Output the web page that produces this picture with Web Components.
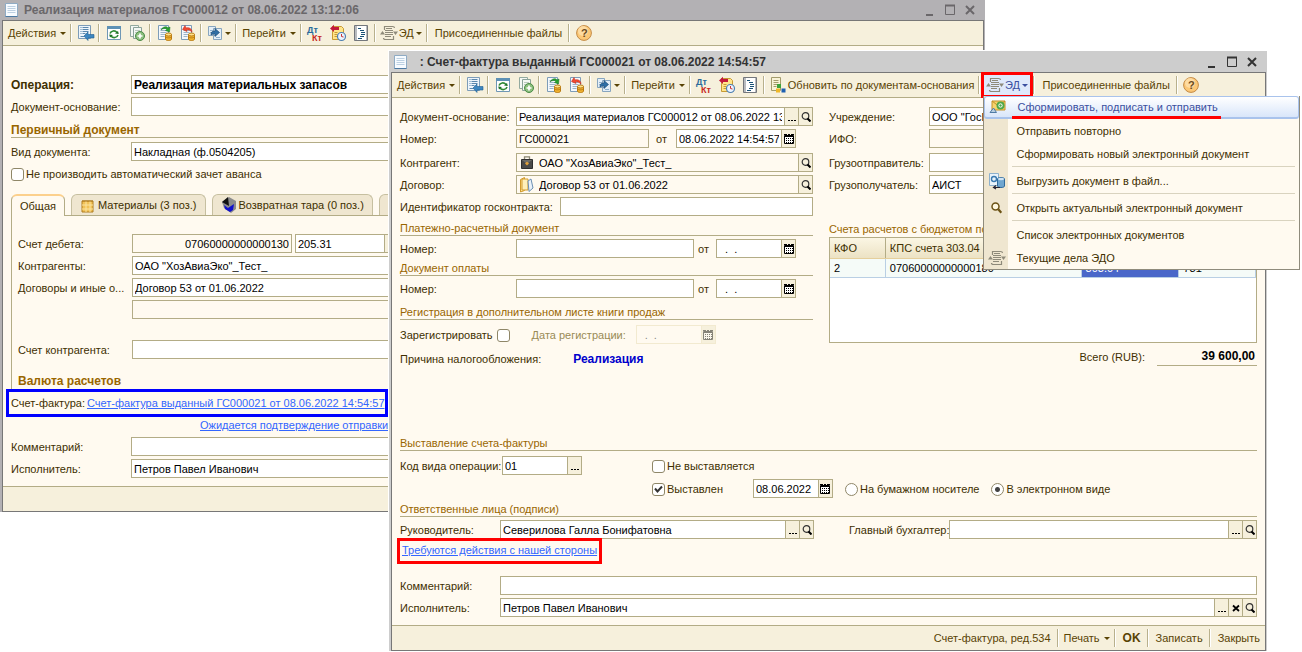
<!DOCTYPE html>
<html lang="ru">
<head>
<meta charset="utf-8">
<title>Счет-фактура выданный</title>
<style>
body { margin: 0; background: #fff; color: #402f00; font: 11px/14px "Liberation Sans", Arial, sans-serif; }
</style>
</head>
<body>
<doc-desktop></doc-desktop>
<script>
const BASE = `*{box-sizing:border-box}
button,input{font:inherit;color:inherit;margin:0;padding:0;border:0;background:none;border-radius:0}
button{cursor:pointer}a{color:#36f}`;

const PAGE = '<path d="M1.5 .5h10v14h-10z" fill="#f4f8fc" stroke="#7d9cb8"/><path d="M3.500 3.500h6M3.500 5.500h6M3.500 7.500h6M3.500 9.500h6M3.500 11.500h4" stroke="#9db4cb"/>';
const COINS = '<path d="M8.500 9.500v4.500c0 2 6 2 6 0V9.500z" fill="#f2b431" stroke="#b97a12"/><ellipse cx="11.500" cy="9.500" rx="3" ry="1.500" fill="#ffe28a" stroke="#b97a12"/><path d="M8.500 11.500c0 1.800 6 1.800 6 0" fill="none" stroke="#b97a12"/>';
const ICONS = {
  doc: '<path d="M1.500 1.500h12v13h-12z" fill="#f7fbff" stroke="#8fabc4"/><path d="M3.500 4.500h8M3.500 6.500h8M3.500 8.500h8M3.500 10.500h8" stroke="#bcd0e2"/><path d="M1.500 14.500h12" stroke="#4d7aa3"/>',
  save: '<path d="M.5 .5h12v13H.5z" fill="#eef5fb" stroke="#7d9cb8"/><path d="M2.500 2.500h1m1 0h6M2.500 4.500h1m1 0h6M2.500 6.500h1m1 0h6M2.500 8.500h1m1 0h3M2.500 11.500h4" stroke="#5b87ad"/><path d="M6 11l4-4v2.500h6v3.500h-6v2.500z" fill="#3d86c0" stroke="#1f5e92" stroke-width=".6"/>',
  refresh: '<path d="M1.500 1.500h13v13h-13z" fill="#fff" stroke="#6f97b5"/><path d="M1 1h14v3H1z" fill="#5e91b5"/><path d="M4 8.500c1-3 5-3.500 7-1M12 10c-1 3-5 3.500-7 1" fill="none" stroke="#2e8a35" stroke-width="1.600"/><path d="M12.800 9l-3.800-.5 3-2.500zM3.200 9.500l3.800.5-3 2.500z" fill="#1d7025"/>',
  copyadd: '<path d="M1.500 .5h8v11h-8z" fill="#f4f8f4" stroke="#93aa9f"/><path d="M4.500 2.500h8v11h-8z" fill="#f4f8f4" stroke="#8ba39a"/><path d="M6 5.500h5M6 7.500h5" stroke="#bccabf"/><circle cx="11" cy="11" r="4.500" fill="#8cc07e" stroke="#4a8a46"/><path d="M11 8.500v5M8.500 11h5" stroke="#fff" stroke-width="1.700"/>',
  post: PAGE + '<path d="M4 5c2-4 6-4 7-2l2-1-.5 5-4-1.500 1.300-1C9 3 6 3 4 5z" fill="#27a22e" stroke="#13701a" stroke-width=".5"/>' + COINS,
  unpost: PAGE + '<path d="M12 7c0-4-4-5-6-4L5 .5 2.500 4.500 7 6.500 6.500 4.800C9 4.500 10 5.500 12 7z" fill="#f04a32" stroke="#c3200c" stroke-width=".5"/>' + COINS,
  goto: '<path d="M1.500 1.500h7v9h-7zM6.500 3.500h8v11h-8z" fill="#e3eef7" stroke="#87a5bf"/><path d="M3 5.500h3M3 7.500h3M9 12.500h4" stroke="#8fb0cc"/><path d="M4 10c0-3 1-4 4-4V3.500l4.500 4L8 11.500V9C6 9 5 9.500 4 10z" fill="#2f6ea5" stroke="#17466f" stroke-width=".6"/>',
  dtkt: '<text x="0" y="8" font-size="9" fill="#2a6a9a" font-weight="bold">Дт</text><text x="5" y="16" font-size="9" fill="#c7281c" font-weight="bold">Кт</text>',
  hist: '<path d="M2.500 1.500h9l2 2v11h-11z" fill="#ffe58a" stroke="#c79a34"/><path d="M4.500 7.500h3M4.500 9.500h3M4.500 11.500h3" stroke="#c79a34"/><path d="M0 3.500L4-.2V2h5v3H4v2z" fill="#c2183a"/><circle cx="11.500" cy="11.500" r="4" fill="#eaf4ff" stroke="#4d7fb0" stroke-width="1.200"/><path d="M11.500 9v2.500l2 .5" fill="none" stroke="#c33"/>',
  list: '<path d="M1.500 .5h13v15h-13z" fill="#b9bcc0" stroke="#74777c"/><path d="M4 1h9v14H4z" fill="#fff"/><path d="M5 3.500h3M7 5.500h4M8 7.500h4M8 9.500h4M7 11.500h4M5 13.500h4" stroke="#1a5277"/>',
  edo: '<path d="M3.500 5V1.500h8c1.500 0 2 .5 2 1.500M12.500 11v3.500h-8c-1.500 0-2-.5-2-1.500" fill="none" stroke="#8e8a7a" stroke-width="1.200"/><path d="M5 3.500h6M4 5.500h8M4 7.500h8M4 9.500h8M4 11.500h6" stroke="#8e8a7a"/><path d="M-1 9.500L1.500 6 4 9.500zM12 6.500h5L14.500 10z" fill="#8e8a7a"/>',
  help: '<circle cx="8" cy="8" r="7.400" fill="#fcc877" stroke="#c48a45"/><circle cx="7" cy="6" r="5" fill="#ffe4b5" opacity=".7"/><text x="5" y="12" font-size="11" font-weight="bold" fill="#6b4a1c">?</text>',
  update: '<path d="M1.500 .5h9v13h-9z" fill="#f8f3d6" stroke="#a39c6c"/><path d="M3.500 3.500h5M3.500 5.500h5M3.500 7.500h5M3.500 9.500h3" stroke="#a39c6c"/><path d="M7 7h4v4H7z" fill="#3da33a"/><path d="M6 11.500h4v4H6z" fill="#efb828"/><path d="M11.500 11.500h4v4h-4z" fill="#1d5fb0"/>',
  bag: '<path d="M5.500 4V1.800h5V4" fill="none" stroke="#8b8672" stroke-width="1.300"/><path d="M2.500 4.500h11v9h-11z" fill="#4a4a49" stroke="#2e2e2e"/><path d="M3 5l5 4 5-4" fill="#6b6b69"/><path d="M8 6.500l2 2-2 2-2-2z" fill="#e0a03a"/>',
  folder: '<path d="M1.500 2.500l4-2v13l-4 1.500z" fill="#ffe28f" stroke="#d19a2c"/><path d="M3 2h6v11H3z" fill="#fff0b8" stroke="#d19a2c"/><path d="M9 4l3-2 2 9-4 3.500z" fill="#eaf2fa" stroke="#6b8fb3"/>',
  table: '<path d="M2 4h11v11H2z" fill="#f2c257" stroke="#b07c20"/><path d="M2 8h11M2 12h11M6 4v11M10 4v11" stroke="#fbe3a0"/><path d="M2 4h11" stroke="#b07c20"/>',
  box: '<path d="M8 0l7 4v8l-5 4-7-5-2-6z" fill="#8c8c8c"/><path d="M1 5l6-5 1 9z" fill="#111"/><path d="M3 8l4 3 6-4-1 6-3 2-5-3z" fill="#11c"/>',
  mail: '<path d="M2 2h13v9H2z" fill="#f6d36b" stroke="#c49127"/><path d="M2 2l6.500 5L15 2" fill="none" stroke="#c49127"/><circle cx="10.500" cy="6.500" r="4" fill="#4fa84a"/><circle cx="10.500" cy="6.500" r="1.700" fill="none" stroke="#fff"/><path d="M0 13.500L3.500 9l3 4.500z" fill="#b7cde0" stroke="#4f7ba5"/>',
  export: '<path d="M.5 .5h9v12h-9z" fill="#e8f2fa" stroke="#8db0cc"/><circle cx="5" cy="6" r="2.500" fill="none" stroke="#3a7ab0" stroke-width="1.400"/><path d="M8.500 6c0-2 7-2 7 0v7c0 2-7 2-7 0z" fill="#6fa6d0" stroke="#2f6a9c"/><ellipse cx="12" cy="6" rx="3" ry="1.200" fill="#cfe3f3"/><path d="M11 14.500H5M7 12.500l-2.500 2L7 16" fill="none" stroke="#223" stroke-width="1.200"/>',
  lens: '<circle cx="6.500" cy="6.500" r="3.500" fill="#fff8e0" stroke="#6b5214" stroke-width="1.500"/><path d="M9.300 9.300l3 3.500" stroke="#6b5214" stroke-width="2.200"/>'
};
const SMALL = {
  dots: '<path d="M1 8h2v1H1zM4 8h2v1H4zM7 8h2v1H7z" fill="#000"/>',
  find: '<circle cx="4.500" cy="4" r="3.300" fill="none" stroke="#333" stroke-width="1.200"/><path d="M6.500 6.500L9.500 9.500" stroke="#000" stroke-width="2"/>',
  cal: '<path d="M.5 1.500h9v8h-9z" fill="#fff" stroke="#000"/><path d="M0 .5h3M4 .5h2M7 .5h3M0 2.500h10" stroke="#000"/><path d="M2 4.500h7M2 6.500h7M2 8.500h7" stroke="#000" stroke-dasharray="1 1"/>',
  clear: '<path d="M2 2.500l6 5.500M8 2.500L2 8" stroke="#000" stroke-width="1.800"/>'
};
const SMALL_NAMES = { dots: 'Выбрать', find: 'Открыть', cal: 'Календарь', clear: 'Очистить' };
const svg = (body, s) => `<svg width="${s}" height="${s}" viewBox="0 0 ${s} ${s}" aria-hidden="true">${body}</svg>`;

function define(name, css, html) {
  customElements.define(name, class extends HTMLElement {
    connectedCallback() {
      if (this.shadowRoot) return;
      const t = document.createElement('template');
      const a = (n, d = '') => this.getAttribute(n) ?? d;
      t.innerHTML = `<style>${BASE}${css}</style>${html(a, this)}`;
      this.attachShadow({ mode: 'open' }).append(t.content.cloneNode(true));
    }
  });
}

define('ui-icon', ':host{display:block;width:16px;height:16px;flex:none}svg{display:block;overflow:visible}',
  a => svg(ICONS[a('name')], 16));

/* Window: title bar, toolbar, content, footer */
define('win-frame', `
:host{display:block;background:var(--frame,#cdcdcd)}
header{display:flex;align-items:center;height:var(--title-h,21px);padding:0 8px 0 4px;gap:4px;font-size:12px;font-weight:bold;color:var(--title,#333)}
h1{flex:1;margin:0;font:inherit;white-space:pre}
header button{width:14px;height:14px;margin-left:2px}
header svg{display:block}
.in{margin:0 1px 0 2px;border:1px solid #777;background:#fffaf0}
.bar{display:flex;align-items:stretch;height:25px;padding-left:2px;background:#f6f0dc;border-bottom:1px solid #b3ac86}
.foot{display:flex;justify-content:flex-end;height:25px;background:#f6f0dc;border-top:1px solid #b3ac86}`,
  a => `<header><ui-icon name="doc"></ui-icon><h1>${a('heading')}</h1>
<button aria-label="Свернуть">${svg('<path d="M3 12h7" stroke="currentColor" stroke-width="2"/>', 14)}</button>
<button aria-label="Развернуть">${svg('<path d="M2.500 2.500h9v9h-9z" fill="none" stroke="currentColor"/><path d="M2 2.500h10" stroke="currentColor" stroke-width="2"/>', 14)}</button>
<button aria-label="Закрыть окно">${svg('<path d="M3 3l8 8M11 3l-8 8" stroke="currentColor" stroke-width="2"/>', 14)}</button></header>
<div class="in"><div class="bar"><slot name="bar"></slot></div><slot></slot><div class="foot"><slot name="foot"></slot></div></div>`);

define('tool-btn', `
:host{display:flex;color:#594304}
button{display:flex;align-items:center;height:100%;padding:0 3px;gap:2px;white-space:nowrap}
.a{width:0;height:0;border:3px solid transparent;border-top-color:currentColor;border-bottom:0;margin-left:2px}
:host([ico]) button{min-width:23px;justify-content:center}
:host([ico]) .a{margin-left:0}
:host([bold]) button{font-size:12px;font-weight:bold}
:host([wide]) button{padding:0 5px}`,
  (a, el) => `<button ${a('label') ? `aria-label="${a('label')}"` : ''}>${a('ico') ? `<ui-icon name="${a('ico')}"></ui-icon>` : ''}<slot></slot>${el.hasAttribute('arrow') ? '<span class="a"></span>' : ''}</button>`);

define('tool-sep', ':host{display:block;width:5px;padding:3px 1px}i{display:block;width:2px;height:100%;background:linear-gradient(90deg,#b8b08c 50%,#fff 50%)}', () => '<i></i>');

let uid = 0;
define('form-field', `
:host{display:flex;height:22px;padding-top:1px;min-width:0}
:host([fill]){flex:1}
label{flex:none;line-height:20px;white-space:nowrap}
.box{display:flex;flex:1;min-width:0;height:19px;border:1px solid #b3ac86;background:#fff;color:#000;align-items:center}
:host([ro]) .box{background:#fffaf0}
:host([off]){color:#998a55}
:host([off]) .box{border-color:#f2ead0;background:#fffaf0;color:#888}
:host([off]) svg{opacity:.45}
:host([off]) .box button{border-color:#f2ead0}
:host([bold]){font-size:12px;font-weight:bold}
input{flex:1;min-width:0;width:0;height:17px;padding:0 2px;outline:0;white-space:pre}
:host([num]) input{text-align:right}
ui-icon{margin:0 2px}
.box button{flex:none;width:14px;height:17px;border-left:1px solid #b3ac86;background:#f6f0dc;display:flex;align-items:center;justify-content:center}`,
  (a, el) => {
    const id = 'f' + (++uid), w = a('w');
    const lab = a('label') ? `<label for="${id}" style="width:${a('lw', '116')}px">${a('label')}</label>` : '';
    return `${lab}<div class="box"${w ? ` style="flex:none;width:${w}px"` : ''}>${a('icon') ? `<ui-icon name="${a('icon')}"></ui-icon>` : ''}
<input id="${id}" value='${a('value')}' ${a('name') ? `aria-label="${a('name')}"` : ''} ${el.hasAttribute('ro') ? 'readonly' : ''} ${el.hasAttribute('off') ? 'disabled' : ''}>${a('btns').split(' ').filter(Boolean).map(b => `<button aria-label="${SMALL_NAMES[b]}">${svg(SMALL[b], 10)}</button>`).join('')}</div>`;
  });

define('check-mark', `
:host{display:flex;align-items:center;height:22px}
label{display:flex;align-items:center;gap:2px;white-space:nowrap}
:host([before]) label{flex-direction:row-reverse;gap:4px}
input{appearance:none;flex:none;width:13px;height:13px;border:1px solid #8f8768;border-radius:3px;background:#fff center/11px 11px no-repeat}
input[type=radio]{border-radius:7px}
input[type=checkbox]:checked{background-image:url("data:image/svg+xml,%3Csvg xmlns='http://www.w3.org/2000/svg' viewBox='0 0 11 11'%3E%3Cpath d='M2 4.500l2.500 3L9 2.500' fill='none' stroke='%23333' stroke-width='2'/%3E%3C/svg%3E")}
input[type=radio]:checked{background-image:radial-gradient(circle,#444 2px,transparent 3px)}`,
  (a, el) => `<label><input type="${a('type', 'checkbox')}" ${el.hasAttribute('checked') ? 'checked' : ''}><span><slot></slot></span></label>`);

define('section-head', `:host{display:block;height:16px;color:#960;border-bottom:1px solid #b3ac86;white-space:nowrap}
:host([bold]){font-size:12px;font-weight:bold}:host([plain]){border-color:transparent}h2{margin:0;font:inherit;line-height:16px}`, () => '<h2><slot></slot></h2>');

define('tab-btn', `
:host{display:block;height:21px;border:1px solid #c6bfa0;border-bottom:0;border-radius:6px 6px 0 0;background:#efe6d0;margin-bottom:1px}
:host([on]){background:#fffaf0;border-top:2px solid #fcd08c;border-color:#fcd08c #b3ac86;height:22px;margin-bottom:0}
button{display:flex;align-items:center;gap:2px;height:19px;padding:0 8px;white-space:nowrap;width:100%}`,
  (a, el) => `<button role="tab" aria-selected="${el.hasAttribute('on')}"${a('label') ? ` aria-label="${a('label')}"` : ''}>${a('ico') ? `<ui-icon name="${a('ico')}"></ui-icon>` : ''}<slot></slot></button>`);

define('menu-item', `
:host{display:block;height:23px}
button{display:flex;align-items:center;width:100%;height:23px;text-align:left;white-space:nowrap}
.g{flex:none;width:32px;padding-left:5px}
:host([on]) button{border:1px solid #a9c3ec;border-width:1px 1px 2px;border-radius:3px;background:linear-gradient(#fff,#d9e6fa);color:#3a4fa0}
:host([mark]) .t{position:relative}
:host([mark]) .t::after{content:"";position:absolute;left:-5px;right:-3px;top:16px;height:3px;background:#f00}`,
  a => `<button role="menuitem"><span class="g">${a('ico') ? `<ui-icon name="${a('ico')}"></ui-icon>` : ''}</span><span class="t"><slot></slot></span></button>`);

define('drop-menu', `
:host{display:block;width:317px;color:#402f00;background:linear-gradient(90deg,#efe6d0 24px,#fffaf0 24px);border:1px solid #8f8b7c;border-width:0 1px 1px}`,
  () => '<div role="menu"><slot></slot></div>');
define('menu-sep', ':host{display:block;height:4px;padding:1px 4px 0 28px}hr{margin:0;border:0;border-top:1px solid #d9d3bf}', () => '<hr>');

const barStart = `<tool-btn slot="bar" arrow>Действия</tool-btn><tool-sep slot="bar"></tool-sep>
<tool-btn slot="bar" ico="save" label="Записать и закрыть"></tool-btn><tool-sep slot="bar"></tool-sep>
<tool-btn slot="bar" ico="refresh" label="Обновить"></tool-btn><tool-btn slot="bar" ico="copyadd" label="Скопировать"></tool-btn><tool-sep slot="bar"></tool-sep>
<tool-btn slot="bar" ico="post" label="Провести"></tool-btn><tool-btn slot="bar" ico="unpost" label="Отменить проведение"></tool-btn><tool-sep slot="bar"></tool-sep>
<tool-btn slot="bar" ico="goto" label="Ввести на основании" arrow></tool-btn><tool-sep slot="bar"></tool-sep>
<tool-btn slot="bar" arrow>Перейти</tool-btn><tool-sep slot="bar"></tool-sep>
<tool-btn slot="bar" ico="dtkt" label="Проводки"></tool-btn><tool-btn slot="bar" ico="hist" label="История"></tool-btn><tool-btn slot="bar" ico="list" label="Список"></tool-btn><tool-sep slot="bar"></tool-sep>`;
const barEnd = `<tool-sep slot="bar"></tool-sep><tool-btn slot="bar" wide>Присоединенные файлы</tool-btn><tool-sep slot="bar"></tool-sep><tool-btn slot="bar" ico="help" label="Справка"></tool-btn>`;

define('release-window', `
:host{display:block}
win-frame{--frame:#b3b1b4;--title:#6a676a;--title-h:20px}
.body{padding:28px 8px 6px}
.tabs{display:flex;gap:6px;margin-top:9px;background:linear-gradient(#b3ac86,#b3ac86) bottom/100% 1px no-repeat;align-items:flex-end}
.panel{border-left:1px solid #b3ac86;padding:17px 0 0 6px}
.row{display:flex;gap:3px}
.invoice{display:flex;align-items:center;gap:2px;width:376px;height:22px;margin:3px 0 2px -2px;padding-left:2px;outline:3px solid #00f;white-space:nowrap}
.status{height:20px;padding-left:189px;line-height:18px}
.s4{margin-top:4px}.s3{margin-top:3px}.s12{margin-top:12px}.s18{margin-top:18px}`,
  () => `<win-frame heading="Реализация материалов ГС000012 от 08.06.2022 13:12:06">${barStart}
<tool-btn slot="bar" ico="edo" arrow>ЭД</tool-btn>${barEnd}
<div class="body">
<form-field lw="120" label="Операция:" value="Реализация материальных запасов" bold></form-field>
<form-field lw="120" label="Документ-основание:"></form-field>
<section-head bold class="s4">Первичный документ</section-head>
<form-field class="s3" lw="120" label="Вид документа:" value="Накладная (ф.0504205)"></form-field>
<check-mark>Не производить автоматический зачет аванса</check-mark>
<div class="tabs" role="tablist"><tab-btn on>Общая</tab-btn><tab-btn ico="table">Материалы (3 поз.)</tab-btn><tab-btn ico="box">Возвратная тара (0 поз.)</tab-btn><tab-btn ico="table" label="Проводки"></tab-btn></div>
<div class="panel">
<div class="row"><form-field lw="114" label="Счет дебета:" w="160" value="07060000000000130" ro num></form-field><form-field name="Счет" w="104" value="205.31" btns="dots"></form-field></div>
<form-field lw="114" label="Контрагенты:" value='ОАО "ХозАвиаЭко"_Тест_'></form-field>
<form-field lw="114" label="Договоры и иные о..." value="Договор 53 от 01.06.2022"></form-field>
<form-field lw="114" label="&nbsp;" ro></form-field>
<form-field class="s18" lw="114" label="Счет контрагента:"></form-field>
<section-head bold plain class="s12">Валюта расчетов</section-head>
</div>
<div class="invoice"><span>Счет-фактура:</span><a href="#invoice">Счет-фактура выданный ГС000021 от 08.06.2022 14:54:57</a></div>
<div class="status"><a href="#status">Ожидается подтверждение отправки</a></div>
<form-field lw="120" label="Комментарий:"></form-field>
<form-field lw="120" label="Исполнитель:" value="Петров Павел Иванович"></form-field>
</div></win-frame>`);

define('invoice-window', `
:host{display:block;border:solid #fff;border-width:1px 0 0 1px}
.edo{position:relative;display:flex;width:50px;background:#dfe9fb;outline:3px solid #f00;outline-offset:-2px;justify-content:center;z-index:2}
.edo>tool-btn{color:#3a4fa0}
drop-menu{position:absolute;top:100%;left:1px;margin-top:-1px}
.body{padding:8px 8px 6px}
.cols{display:flex;gap:16px}
.left{width:413px;flex:none}
.right{flex:1;min-width:0}
.row{display:flex}
.m2{margin-top:2px}.m4{margin-top:4px}.m7{margin-left:7px}.m25{margin-top:25px}
.reason{display:flex;gap:32px;margin-top:6px;line-height:14px}
.reason b{font-size:12px;color:#00c}
.grid{height:106px;border:1px solid #b3ac86;background:#fff;overflow:hidden}
table{width:100%;table-layout:fixed;border-collapse:collapse}
th{height:20px;padding:0 4px;text-align:left;font-weight:normal;background:linear-gradient(#fbf6e4,#ece2c4);border-right:1px solid #b3ac86;border-bottom:1px solid #e5cf9c}
td{height:19px;padding:0 4px;color:#000;background:#f5fbf8;border-right:1px solid #b9cfe4;border-bottom:1px solid #b9cfe4}
th,td{white-space:nowrap}
td.sel{background:#4a67c9;color:#fff}
.total{display:flex;justify-content:flex-end;gap:12px;height:23px;line-height:28px}
.total b{width:100px;text-align:right;font-size:12px;line-height:26px;color:#000;border-bottom:1px solid #b3ac86;padding-right:2px}
.issue{margin-top:69px}
.code{display:grid;grid-template-columns:252px auto;margin:4px 0 1px;row-gap:1px}
.when{display:flex;gap:12px}
.when form-field{margin:0 0 0 18px}
.act{height:34px}
.act a{position:relative;display:inline-block;height:20px;padding:0 2px;line-height:18px;outline:3px solid #f00}
.chief form-field:first-child{width:414px}
.chief{margin-top:2px;gap:35px}`,
  () => `<win-frame heading="  : Счет-фактура выданный ГС000021 от 08.06.2022 14:54:57">${barStart}
<tool-btn slot="bar" ico="update">Обновить по документам-основания</tool-btn><tool-sep slot="bar"></tool-sep>
<div class="edo" slot="bar"><tool-btn ico="edo" arrow>ЭД</tool-btn>
<drop-menu><menu-item ico="mail" on mark>Сформировать, подписать и отправить</menu-item><menu-item>Отправить повторно</menu-item><menu-item>Сформировать новый электронный документ</menu-item><menu-sep></menu-sep><menu-item ico="export">Выгрузить документ в файл...</menu-item><menu-sep></menu-sep><menu-item ico="lens">Открыть актуальный электронный документ</menu-item><menu-sep></menu-sep><menu-item>Список электронных документов</menu-item><menu-item ico="edo">Текущие дела ЭДО</menu-item></drop-menu></div>${barEnd}
<div class="body"><div class="cols"><div class="left">
<form-field label="Документ-основание:" value="Реализация материалов ГС000012 от 08.06.2022 13" btns="dots find"></form-field>
<div class="row"><form-field label="Номер:" w="133" value="ГС000021" ro></form-field><form-field class="m7" lw="20" label="от" w="120" value="08.06.2022 14:54:57" btns="cal"></form-field></div>
<form-field class="m2" label="Контрагент:" icon="bag" value='ОАО "ХозАвиаЭко"_Тест_' btns="find" ro></form-field>
<form-field label="Договор:" icon="folder" value="Договор 53 от 01.06.2022" btns="find" ro></form-field>
<form-field lw="160" label="Идентификатор госконтракта:"></form-field>
<section-head class="m2">Платежно-расчетный документ</section-head>
<div class="row m2"><form-field label="Номер:" w="178"></form-field><form-field style="margin-left:4px" lw="18" label="от" w="80" value="  .  ." btns="cal"></form-field></div>
<section-head>Документ оплаты</section-head>
<div class="row m2"><form-field label="Номер:" w="178"></form-field><form-field style="margin-left:4px" lw="18" label="от" w="80" value="  .  ." btns="cal"></form-field></div>
<section-head class="m4">Регистрация в дополнительном листе книги продаж</section-head>
<div class="row m4"><check-mark before>Зарегистрировать</check-mark><form-field style="margin-left:22px" lw="104" label="Дата регистрации:" w="80" value="  .  ." btns="cal" off></form-field></div>
<div class="reason"><span>Причина налогообложения:</span><b>Реализация</b></div>
</div><div class="right">
<form-field lw="100" label="Учреждение:" value='ООО "ГосПроект"' btns="dots find"></form-field>
<form-field lw="100" label="ИФО:" ro></form-field>
<form-field class="m2" lw="100" label="Грузоотправитель:" btns="dots find"></form-field>
<form-field lw="100" label="Грузополучатель:" value="АИСТ" btns="dots find"></form-field>
<section-head plain class="m25">Счета расчетов с бюджетом по НДС</section-head>
<div class="grid"><table><colgroup><col style="width:13%"><col style="width:46%"><col style="width:23%"><col></colgroup>
<thead><tr><th>КФО</th><th>КПС счета 303.04</th><th></th><th></th></tr></thead>
<tbody><tr><td>2</td><td>07060000000000180</td><td class="sel">303.04</td><td>731</td></tr></tbody></table></div>
<div class="total"><span>Всего (RUB):</span><b>39 600,00</b></div>
</div></div>
<section-head class="issue">Выставление счета-фактуры</section-head>
<div class="code"><form-field lw="102" label="Код вида операции:" w="80" value="01" btns="dots"></form-field><check-mark>Не выставляется</check-mark>
<span></span><div class="when"><check-mark checked>Выставлен</check-mark><form-field name="Дата выставления" w="80" value="08.06.2022" btns="cal"></form-field><check-mark type="radio">На бумажном носителе</check-mark><check-mark type="radio" checked>В электронном виде</check-mark></div></div>
<section-head>Ответственные лица (подписи)</section-head>
<div class="row chief"><form-field lw="100" label="Руководитель:" value="Северилова Галла Бонифатовна" btns="dots find"></form-field><form-field fill lw="100" label="Главный бухгалтер:" btns="dots find"></form-field></div>
<div class="act"><a href="#action">Требуются действия с нашей стороны</a></div>
<form-field lw="100" label="Комментарий:"></form-field>
<form-field lw="100" label="Исполнитель:" value="Петров Павел Иванович" btns="dots clear find"></form-field>
</div>
<tool-btn slot="foot" wide>Счет-фактура, ред.534</tool-btn><tool-sep slot="foot"></tool-sep><tool-btn slot="foot" arrow>Печать</tool-btn><tool-sep slot="foot"></tool-sep><tool-btn slot="foot" wide bold>OK</tool-btn><tool-sep slot="foot"></tool-sep><tool-btn slot="foot" wide>Записать</tool-btn><tool-sep slot="foot"></tool-sep><tool-btn slot="foot" wide>Закрыть</tool-btn>
</win-frame>`);

/* Desktop: the two document windows overlap on a free canvas */
define('doc-desktop', `
:host{display:block;position:relative;min-height:100vh;overflow:hidden}
release-window{position:absolute;left:0;top:0;right:317px}
invoice-window{position:absolute;left:388px;top:50px;right:35px}`,
  () => '<release-window></release-window><invoice-window></invoice-window>');
</script>
</body>
</html>
